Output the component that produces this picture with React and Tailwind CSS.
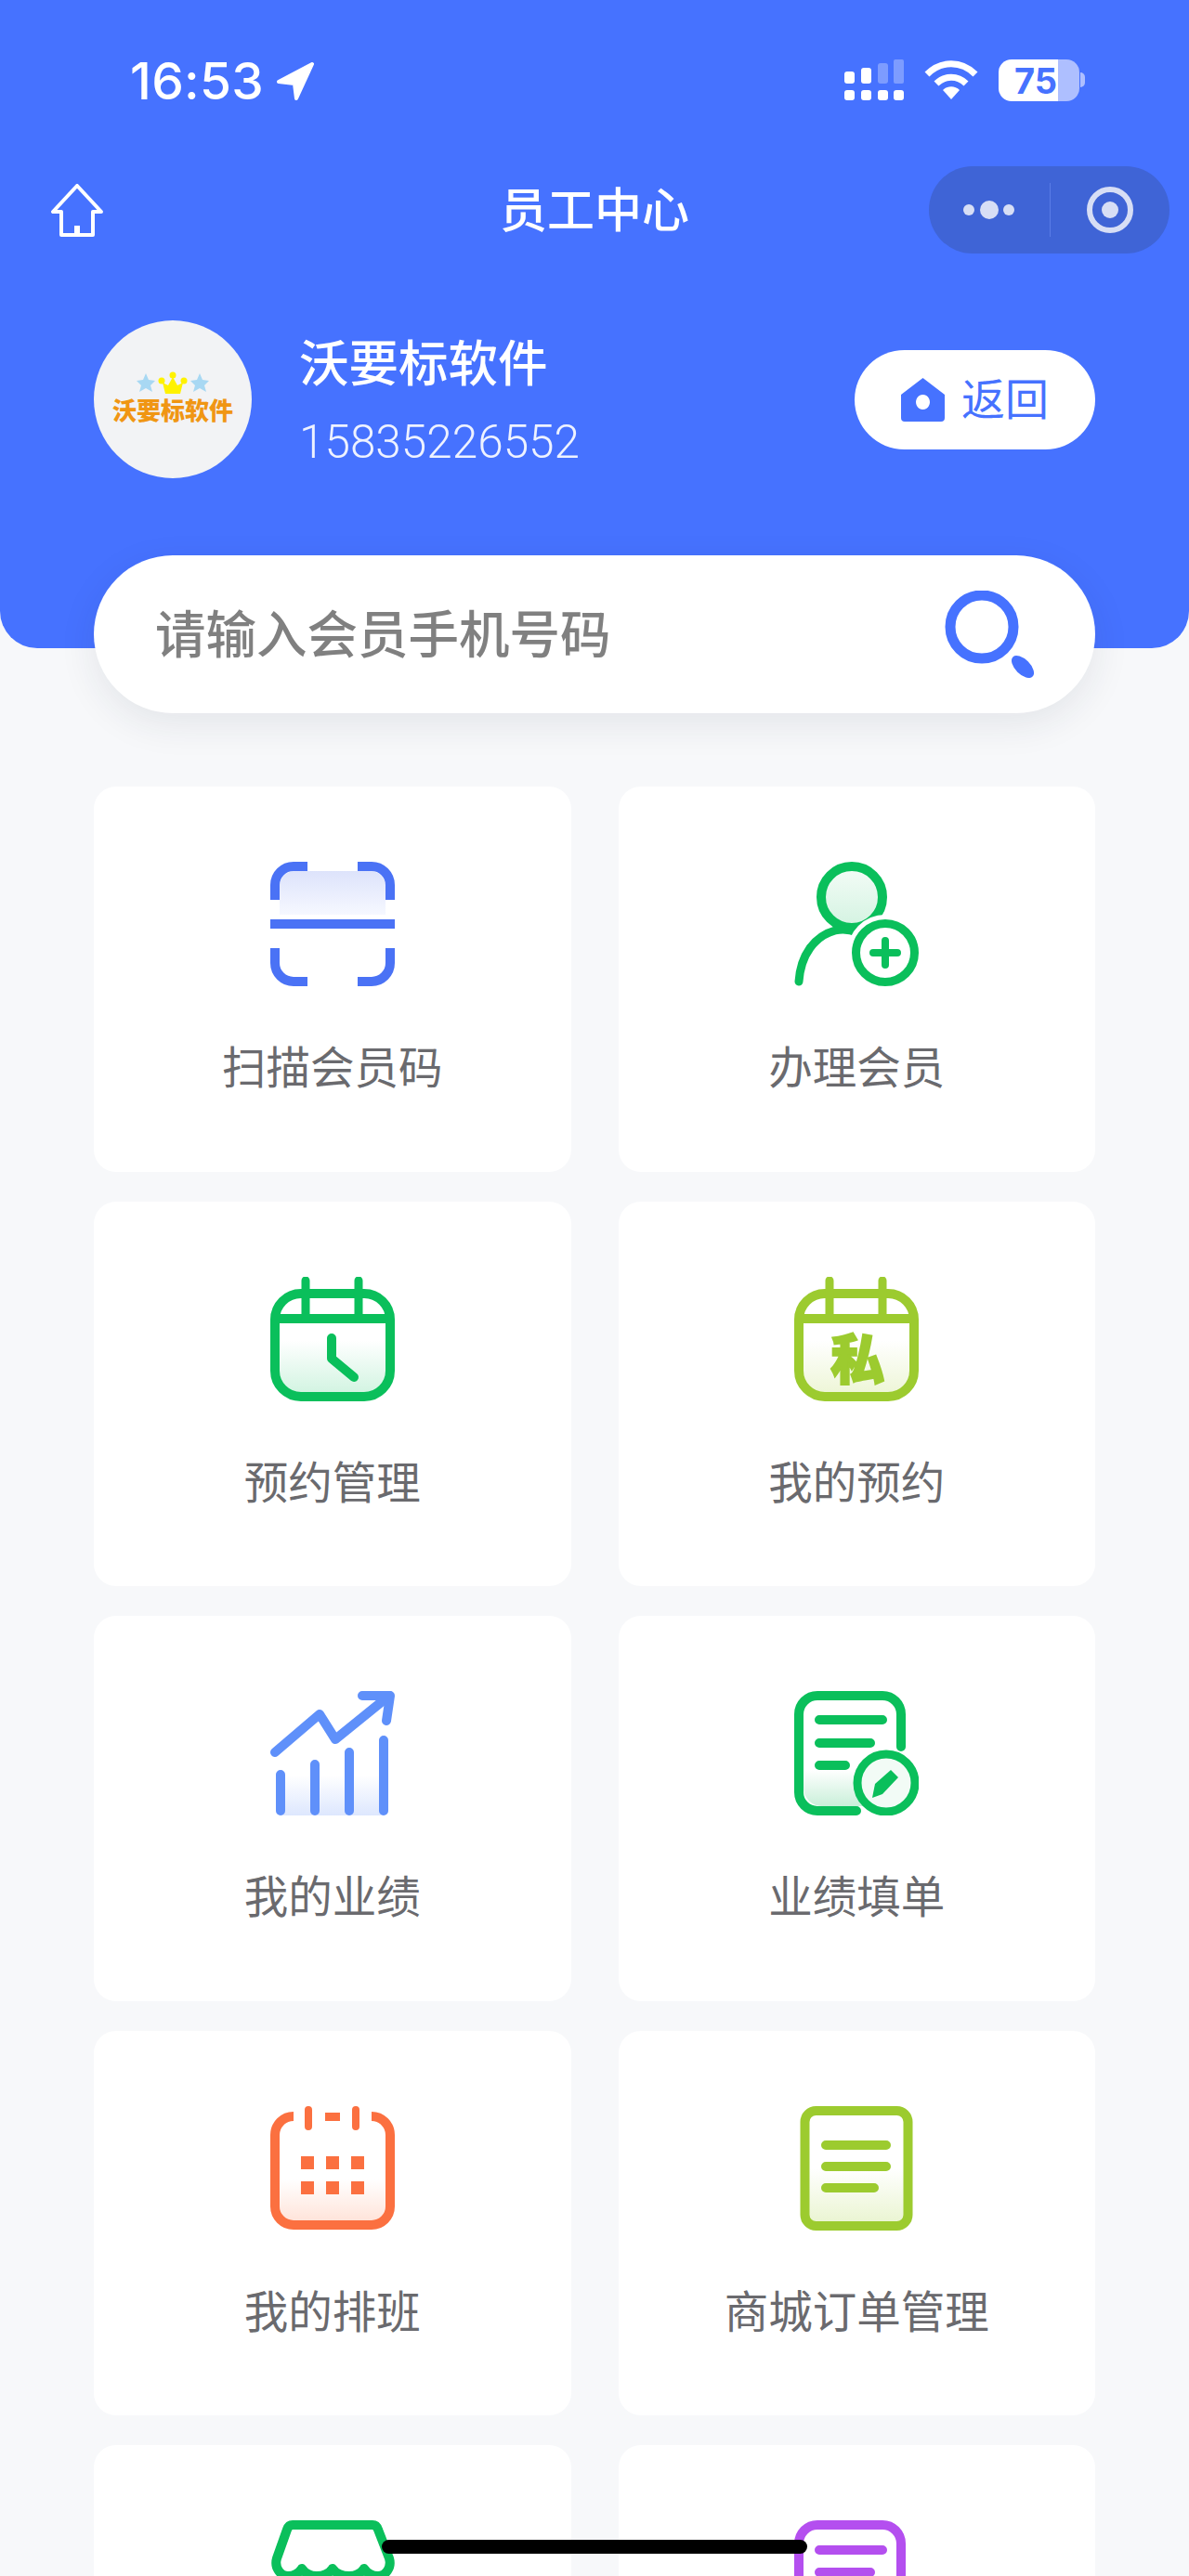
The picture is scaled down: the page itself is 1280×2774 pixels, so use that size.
import React from 'react';

const GradFill = ({ id, to, from = '#ffffff', start = 0 }) => (
  <defs>
    <linearGradient id={id} x1="0" y1="0" x2="0" y2="1">
      <stop offset={start} stopColor={from} />
      <stop offset="1" stopColor={to} />
    </linearGradient>
  </defs>
);

const ScanIcon = () => (
  <svg width="134" height="134" viewBox="0 0 134 134" fill="none">
    <GradFill id="scan" from="#dde3fb" to="#f6f8ff" />
    <path d="M10 26a16 16 0 0 1 16-16h82a16 16 0 0 1 16 16v31H10z" fill="url(#scan)" />
    <g stroke="#4a72f5" strokeWidth="10">
      <path d="M5 41V25A20 20 0 0 1 25 5h15" />
      <path d="M94 5h15a20 20 0 0 1 20 20v16" />
      <path d="M5 93v16a20 20 0 0 0 20 20h15" />
      <path d="M94 129h15a20 20 0 0 0 20-20V93" />
      <path d="M0 67h134" />
    </g>
  </svg>
);

const PersonAddIcon = () => (
  <svg width="134" height="134" viewBox="0 0 134 134" fill="none">
    <GradFill id="person" from="#f4fcf7" to="#d3f3e1" />
    <circle cx="62" cy="38" r="33" fill="url(#person)" stroke="#0abf5b" strokeWidth="10" />
    <path d="M5 129C7 100 22 80 44 74c8-2 16-1 24 2" stroke="#0abf5b" strokeWidth="9" strokeLinecap="round" />
    <circle cx="98" cy="98" r="41" fill="#fff" />
    <circle cx="98" cy="98" r="31.5" fill="#fff" stroke="#0abf5b" strokeWidth="9" />
    <path d="M85 98h26M98 85v26" stroke="#0abf5b" strokeWidth="8" strokeLinecap="round" />
  </svg>
);

const CalendarBase = ({ id, color, to, children }) => (
  <svg width="134" height="134" viewBox="0 0 134 134" fill="none">
    <GradFill id={id} to={to} start="0.25" />
    <path d="M10 50h114v54a20 20 0 0 1-20 20H30a20 20 0 0 1-20-20z" fill={`url(#${id})`} />
    <rect x="5" y="18" width="124" height="111" rx="28" stroke={color} strokeWidth="10" />
    <path d="M5 45h124" stroke={color} strokeWidth="10" />
    <path d="M38 4v41M95 4v41" stroke={color} strokeWidth="9" strokeLinecap="round" />
    {children}
  </svg>
);

const CalendarClockIcon = () => (
  <CalendarBase id="clock" color="#0abf5b" to="#d3f4e2">
    <path d="M66 66v22l24 20" stroke="#0abf5b" strokeWidth="10" strokeLinecap="round" strokeLinejoin="round" />
  </CalendarBase>
);

const CalendarPrivateIcon = () => (
  <CalendarBase id="private" color="#9ccb2f" to="#eef6d8">
    <text
      x="68"
      y="110"
      textAnchor="middle"
      fontSize="58"
      fontWeight="900"
      fill="#9ccb2f"
      stroke="#9ccb2f"
      strokeWidth="2"
      fontFamily="'Noto Sans CJK SC', sans-serif"
    >
      私
    </text>
  </CalendarBase>
);

const ChartIcon = () => (
  <svg width="134" height="134" viewBox="0 0 134 134" fill="none">
    <GradFill id="chart" to="#dde7fe" start="0.2" />
    <path d="M11 80h111v54H11z" fill="url(#chart)" />
    <g stroke="#5f90fa" strokeWidth="10" strokeLinecap="round" strokeLinejoin="round">
      <path d="M11 90v39M48 79v50M85 66v63M122 53v76" />
      <path d="M5 66l48-41 17 27 58-47" />
      <path d="M99 5h30l-4 27" />
    </g>
  </svg>
);

const DocEditIcon = () => (
  <svg width="134" height="134" viewBox="0 0 134 134" fill="none">
    <GradFill id="docedit" to="#c9efd9" start="0.2" />
    <path d="M10 75h100v49H30a20 20 0 0 1-20-20z" fill="url(#docedit)" />
    <path
      d="M115 60V25A20 20 0 0 0 95 5H25A20 20 0 0 0 5 25v84a20 20 0 0 0 20 20h42"
      stroke="#0abf5b"
      strokeWidth="10"
      strokeLinecap="round"
    />
    <path d="M27 31h68M27 56h55M27 80h28" stroke="#0abf5b" strokeWidth="10" strokeLinecap="round" />
    <circle cx="99" cy="99" r="31" fill="#f2fbf6" stroke="#0abf5b" strokeWidth="9" />
    <path d="M84 115l3-15 17-15 8 8-17 18z" fill="#0abf5b" />
  </svg>
);

const CalendarDotsIcon = () => (
  <svg width="134" height="134" viewBox="0 0 134 134" fill="none">
    <GradFill id="dots" to="#ffe1d6" start="0.5" />
    <path d="M10 30h114v78a20 20 0 0 1-20 20H30a20 20 0 0 1-20-20z" fill="url(#dots)" />
    <path
      d="M25 11A20 20 0 0 0 5 31v77a20 20 0 0 0 20 20h84a20 20 0 0 0 20-20V31a20 20 0 0 0-20-20"
      stroke="#fb7040"
      strokeWidth="10"
    />
    <path d="M41 4v18M92 4v18" stroke="#fb7040" strokeWidth="8" strokeLinecap="round" />
    <g fill="#fb7040">
      <rect x="59" y="7" width="16" height="9" />
      <rect x="33" y="54" width="14" height="14" />
      <rect x="60" y="54" width="14" height="14" />
      <rect x="87" y="54" width="14" height="14" />
      <rect x="33" y="81" width="14" height="14" />
      <rect x="60" y="81" width="14" height="14" />
      <rect x="87" y="81" width="14" height="14" />
    </g>
  </svg>
);

const DocIcon = () => (
  <svg width="134" height="134" viewBox="0 0 134 134" fill="none">
    <GradFill id="doc" to="#e9f4cf" start="0.5" />
    <rect x="11.5" y="5" width="111" height="124" rx="12" fill="url(#doc)" stroke="#9ccb2f" strokeWidth="10" />
    <path d="M34 42h65M34 65h65M34 88h52" stroke="#9ccb2f" strokeWidth="10" strokeLinecap="round" />
  </svg>
);

const ShopIcon = () => (
  <svg width="134" height="134" viewBox="0 0 134 134" fill="none">
    <path
      d="M24 5h86c3 0 5 2 6 5l12 31c3 10-4 19-12 19-6 0-11-2-15-8-4 6-10 8-16 8s-14-2-18-8c-4 6-11 8-17 8s-12-2-16-8c-4 6-9 8-15 8-8 0-15-9-12-19L18 10c1-3 3-5 6-5z"
      stroke="#0abf5b"
      strokeWidth="10"
      strokeLinejoin="round"
    />
    <path d="M15 70v44a15 15 0 0 0 15 15h74a15 15 0 0 0 15-15V70" stroke="#0abf5b" strokeWidth="10" />
  </svg>
);

const DocPurpleIcon = () => (
  <svg width="134" height="134" viewBox="0 0 134 134" fill="none">
    <path
      d="M115 60V25A20 20 0 0 0 95 5H25A20 20 0 0 0 5 25v84a20 20 0 0 0 20 20h42"
      stroke="#b44fef"
      strokeWidth="10"
    />
    <path d="M27 32h68M27 56h55" stroke="#b44fef" strokeWidth="10" strokeLinecap="round" />
  </svg>
);

const menus = [
  { label: '扫描会员码', icon: <ScanIcon /> },
  { label: '办理会员', icon: <PersonAddIcon /> },
  { label: '预约管理', icon: <CalendarClockIcon /> },
  { label: '我的预约', icon: <CalendarPrivateIcon /> },
  { label: '我的业绩', icon: <ChartIcon /> },
  { label: '业绩填单', icon: <DocEditIcon /> },
  { label: '我的排班', icon: <CalendarDotsIcon /> },
  { label: '商城订单管理', icon: <DocIcon /> },
  { label: '', icon: <ShopIcon /> },
  { label: '', icon: <DocPurpleIcon /> },
];

const StatusBar = () => (
  <div className="flex h-[179px] pt-[56px] pl-[140px] text-white">
    <div className="flex h-[62px] items-center font-['Inter',sans-serif] text-[55px] font-medium leading-[62px] tracking-[0.3px]">
      16:53
    </div>
    <svg className="ml-[13px] mt-[11px]" width="41" height="41" viewBox="0 0 41 41" fill="#fff">
      <path d="M39 2L3 21l17 2 2 16z" stroke="#fff" strokeWidth="4" strokeLinejoin="round" />
    </svg>
    <div className="ml-auto mr-[112px] mt-[8px] flex items-start">
      <svg width="64" height="44" viewBox="0 0 64 44" fill="#fff">
        <rect x="0" y="33" width="11" height="11" rx="3" />
        <rect x="18" y="33" width="11" height="11" rx="3" />
        <rect x="36" y="33" width="11" height="11" rx="3" />
        <rect x="53" y="33" width="11" height="11" rx="3" />
        <rect x="0" y="13" width="11" height="13" rx="3" />
        <rect x="18" y="9" width="11" height="17" rx="3" />
        <rect x="36" y="4" width="11" height="22" rx="3" fillOpacity="0.3" />
        <rect x="53" y="0" width="11" height="26" rx="2" fillOpacity="0.3" />
      </svg>
      <svg className="ml-[22px]" width="58" height="44" viewBox="0 0 58 44" fill="none">
        <path d="M3 16C18 1 40 1 55 16" stroke="#fff" strokeWidth="7" />
        <path d="M13 26c9-9 23-9 32 0" stroke="#fff" strokeWidth="7" />
        <path d="M20 33c5-5 13-5 18 0l-9 10z" fill="#fff" />
      </svg>
      <div className="ml-[22px] flex h-[45px] w-[87px] items-center rounded-[14px] bg-[linear-gradient(to_right,#fff_74%,#aebfff_74%)] pl-[17px] font-['Inter',sans-serif] text-[38px] font-bold leading-none text-[#4672ff]">
        75
      </div>
      <div className="ml-[1px] mt-[14px] h-[16px] w-[5px] rounded-r-full bg-[#aebfff]" />
    </div>
  </div>
);

const NavBar = () => (
  <div className="grid h-[94px] grid-cols-[1fr_auto_1fr] items-center">
    <div className="pl-[54px]">
      <svg width="58" height="57" viewBox="0 0 58 57" fill="none">
        <path d="M29 2L3 30h9v25h34V30h9z" stroke="#fff" strokeWidth="4" strokeLinejoin="round" />
        <path d="M29 45v10" stroke="#fff" strokeWidth="6" />
      </svg>
    </div>
    <div className="pb-[7px] text-[51px] font-medium leading-[60px] text-white">员工中心</div>
    <div className="flex justify-end pr-[21px]">
      <div className="flex h-[94px] w-[259px] items-center rounded-full bg-[#3f64d6]">
        <div className="flex w-[130px] justify-center">
          <svg width="56" height="24" viewBox="0 0 56 24" fill="#d7def5">
            <circle cx="6" cy="12" r="6" />
            <circle cx="28" cy="12" r="10" />
            <circle cx="49" cy="12" r="6" />
          </svg>
        </div>
        <div className="h-[58px] w-px bg-[#5a7ce6]" />
        <div className="flex flex-1 justify-center">
          <svg width="50" height="50" viewBox="0 0 50 50" fill="none">
            <circle cx="25" cy="25" r="22" stroke="#d7def5" strokeWidth="6" />
            <circle cx="25" cy="25" r="9" fill="#d7def5" />
          </svg>
        </div>
      </div>
    </div>
  </div>
);

const Avatar = () => (
  <div className="flex h-[170px] w-[170px] shrink-0 flex-col items-center rounded-full bg-[#f2f3f5] pt-[55px]">
    <svg width="86" height="26" viewBox="0 0 86 26">
      <path d="M14 2l3 7 7 1-5 5 2 7-7-4-7 4 2-7-5-5 7-1z" fill="#a8d8f3" />
      <path d="M72 2l3 7 7 1-5 5 2 7-7-4-7 4 2-7-5-5 7-1z" fill="#a8d8f3" />
      <path d="M32 12l6 3 5-9 5 9 6-3-3 12H35z" fill="#fff200" />
      <circle cx="31" cy="10" r="3.5" fill="#fff200" />
      <circle cx="43" cy="4" r="3.5" fill="#fff200" />
      <circle cx="55" cy="10" r="3.5" fill="#fff200" />
    </svg>
    <div className="whitespace-nowrap text-[26px] font-black leading-[30px] text-[#f09613]">沃要标软件</div>
  </div>
);

const Header = () => (
  <div className="h-[698px] rounded-b-[40px] bg-[#4672ff]">
    <StatusBar />
    <NavBar />
    <div className="mt-[72px] flex items-center px-[101px]">
      <Avatar />
      <div className="ml-[51px] mt-[4px] flex flex-col gap-[28px] text-white">
        <div className="text-[53.5px] font-medium leading-[60px]">沃要标软件</div>
        <div className="font-['Roboto',sans-serif] text-[49.5px] font-light leading-[60px] text-[#eef2ff]">15835226552</div>
      </div>
      <div className="ml-auto flex h-[107px] w-[259px] items-center gap-[18px] rounded-full bg-white pl-[50px]">
        <svg width="47" height="47" viewBox="0 0 47 47">
          <path
            fillRule="evenodd"
            d="M23.5 0L47 18v25a4 4 0 0 1-4 4H4a4 4 0 0 1-4-4V18zM23.5 18a7.5 8 0 1 0 .01 0z"
            fill="#4672ff"
          />
        </svg>
        <span className="pb-[6px] text-[47px] leading-[60px] text-[#4672ff]">返回</span>
      </div>
    </div>
  </div>
);

const SearchBar = () => (
  <div className="relative mx-[101px] -mt-[100px] flex h-[170px] items-center justify-between rounded-full bg-white pl-[66px] pr-[66px] shadow-[0_12px_40px_rgba(30,40,70,0.09)]">
    <span className="pb-[6px] text-[54.5px] font-medium leading-[70px] text-[#808080]">请输入会员手机号码</span>
    <svg width="96" height="94" viewBox="0 0 96 94" fill="none">
      <circle cx="40" cy="39" r="34" stroke="#4672ff" strokeWidth="11" />
      <ellipse cx="84" cy="82" rx="15" ry="8" transform="rotate(45 84 82)" fill="#4672ff" />
    </svg>
  </div>
);

const App = () => {
  return (
    <div className="relative h-[2774px] w-[1280px] overflow-hidden bg-[#f7f8fa] font-['Noto_Sans_CJK_SC',sans-serif]">
      <Header />
      <SearchBar />
      <div className="mx-[101px] mt-[79px] grid grid-cols-2 auto-rows-[414.5px] gap-x-[51px] gap-y-[32px]">
        {menus.map((item, index) => (
          <div key={index} className="flex flex-col items-center rounded-[24px] bg-white pt-[81px]">
            {item.icon}
            <div className="mt-[55px] text-[47.5px] leading-[60px] text-[#6a6a6e]">{item.label}</div>
          </div>
        ))}
      </div>
      {/* home indicator */}
      <div className="absolute bottom-[24px] left-[411px] h-[15px] w-[458px] rounded-full bg-black" />
    </div>
  );
};

export default App;
